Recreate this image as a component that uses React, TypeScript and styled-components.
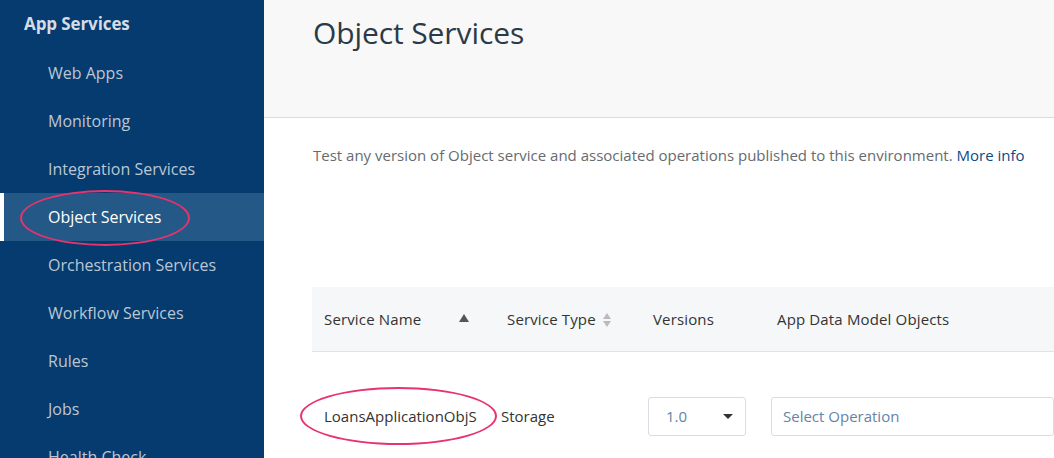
import React from "react";
import styled, { createGlobalStyle } from "styled-components";

const Global = createGlobalStyle`
  html, body { margin: 0; padding: 0; }
  body {
    width: 1054px; height: 458px; overflow: hidden;
    font-family: "Open Sans", "Noto Sans", sans-serif;
    background: #fff;
  }
`;

const Page = styled.div`
  display: flex;
  width: 1054px;
  height: 458px;
  overflow: hidden;
`;

const Sidebar = styled.nav`
  position: relative;
  width: 264px;
  flex: none;
  background: #053b6f;
  display: flex;
  flex-direction: column;
  overflow: hidden;
`;

const SideHeader = styled.div`
  height: 49px;
  flex: none;
  display: flex;
  align-items: center;
  padding-left: 24px;
  padding-bottom: 3px;
  box-sizing: border-box;
  font-size: 17px;
  font-weight: 700;
  color: #d5dce6;
  letter-spacing: -0.1px;
`;

const NavItem = styled.div<{ $active?: boolean }>`
  height: 48px;
  flex: none;
  display: flex;
  align-items: center;
  padding-left: 48px;
  font-size: 16px;
  color: ${(p) => (p.$active ? "#ffffff" : "#bcc7d4")};
  background: ${(p) => (p.$active ? "#245886" : "transparent")};
  box-shadow: ${(p) => (p.$active ? "inset 4px 0 0 #ffffff" : "none")};
`;

const Ellipse = styled.div<{ $l: number; $t: number; $w: number; $h: number }>`
  position: absolute;
  left: ${(p) => p.$l}px;
  top: ${(p) => p.$t}px;
  width: ${(p) => p.$w}px;
  height: ${(p) => p.$h}px;
  border: 2px solid #e8336c;
  border-radius: 50%;
  box-sizing: border-box;
  pointer-events: none;
`;

const Main = styled.main`
  position: relative;
  flex: 1;
  display: flex;
  flex-direction: column;
  overflow: hidden;
`;

const Header = styled.header`
  height: 118px;
  flex: none;
  background: #f8f8f8;
  border-bottom: 1px solid #dcdcdc;
  padding: 12px 0 0 49px;
  box-sizing: border-box;
`;

const Title = styled.h1`
  margin: 0;
  font-size: 30px;
  font-weight: 400;
  color: #2c3a48;
  letter-spacing: -0.1px;
`;

const Description = styled.p`
  flex: none;
  margin: 27px 0 0 49px;
  font-size: 15px;
  color: #666b70;
`;

const Link = styled.a`
  color: #0b4a86;
  text-decoration: none;
`;

const Table = styled.div`
  flex: none;
  margin: 122px 0 0 48px;
  display: grid;
  grid-template-columns: 183px 146px 124px 1fr;
`;

const HeadCell = styled.div`
  height: 65px;
  background: #f5f7f9;
  border-bottom: 1px solid #dfe3e7;
  display: flex;
  align-items: center;
  padding-left: 12px;
  box-sizing: border-box;
  font-size: 15px;
  color: #333;
  letter-spacing: 0.15px;
`;

const SortUp = styled.span`
  margin-left: auto;
  margin-right: 26px;
  width: 0;
  height: 0;
  border-left: 5px solid transparent;
  border-right: 5px solid transparent;
  border-bottom: 8px solid #555;
  margin-top: -2px;
`;

const SortBoth = styled.svg`
  margin-left: 6px;
  margin-top: 2px;
`;

const BodyCell = styled.div<{ $pad: number }>`
  height: 128px;
  display: flex;
  align-items: center;
  padding-left: ${(p) => p.$pad}px;
  box-sizing: border-box;
  font-size: 15px;
  color: #333;
`;

const SelectBox = styled.div<{ $w?: number }>`
  height: 39px;
  width: ${(p) => (p.$w ? `${p.$w}px` : "100%")};
  border: 1px solid #d9dde1;
  border-radius: 3px;
  box-sizing: border-box;
  display: flex;
  align-items: center;
  padding: 0 12px 0 11px;
  font-size: 15px;
  color: #6484a8;
  background: #fff;
`;

const VersionText = styled.span`
  margin-left: 6px;
`;

const Caret = styled.span`
  margin-left: auto;
  width: 0;
  height: 0;
  border-left: 5px solid transparent;
  border-right: 5px solid transparent;
  border-top: 5px solid #333;
`;

const navItems = [
  "Web Apps",
  "Monitoring",
  "Integration Services",
  "Object Services",
  "Orchestration Services",
  "Workflow Services",
  "Rules",
  "Jobs",
  "Health Check",
];

export default function App() {
  return (
    <Page>
      <Global />
      <Sidebar>
        <SideHeader>App Services</SideHeader>
        {navItems.map((n) => (
          <NavItem key={n} $active={n === "Object Services"}>
            {n}
          </NavItem>
        ))}
        <Ellipse $l={20} $t={190} $w={170} $h={56} />
      </Sidebar>
      <Main>
        <Header>
          <Title>Object Services</Title>
        </Header>
        <Description>
          Test any version of Object service and associated operations published to this environment.{" "}
          <Link href="#">More info</Link>
        </Description>
        <Table>
          <HeadCell>
            Service Name
            <SortUp />
          </HeadCell>
          <HeadCell>
            Service Type
            <SortBoth width="10" height="16" viewBox="0 0 10 16">
              <path d="M5 1 L9 7 H1 Z" fill="#bbbbbb" />
              <path d="M5 15 L9 9 H1 Z" fill="#bbbbbb" />
            </SortBoth>
          </HeadCell>
          <HeadCell>Versions</HeadCell>
          <HeadCell>App Data Model Objects</HeadCell>
          <BodyCell $pad={12}>LoansApplicationObjS</BodyCell>
          <BodyCell $pad={6}>Storage</BodyCell>
          <BodyCell $pad={7}>
            <SelectBox $w={98}>
              <VersionText>1.0</VersionText>
              <Caret />
            </SelectBox>
          </BodyCell>
          <BodyCell $pad={6}>
            <SelectBox>Select Operation</SelectBox>
          </BodyCell>
        </Table>
        <Ellipse $l={36} $t={387} $w={197} $h={58} />
      </Main>
    </Page>
  );
}
